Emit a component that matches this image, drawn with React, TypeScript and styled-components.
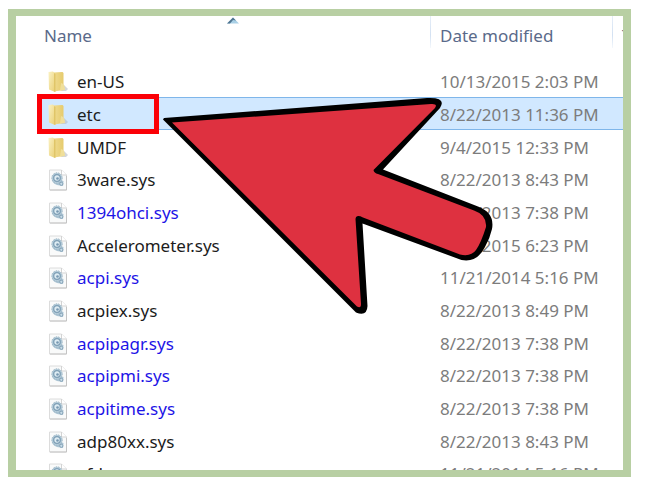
import React from "react";
import styled, { createGlobalStyle } from "styled-components";

const GlobalStyle = createGlobalStyle`
  *, *::before, *::after { box-sizing: border-box; }
  body { margin: 0; background: #ffffff; overflow: hidden; }
`;

const Frame = styled.main`
  position: relative;
  margin: 9px 21px 0 8px;
  height: calc(100vh - 12px);
  padding-left: 24px;
  border: solid #b8cfa3;
  border-width: 7px 8px;
  background: #ffffff;
  overflow: hidden;
  font-family: "Noto Sans", "Open Sans", sans-serif;
  font-size: 17px;
  line-height: 24px;
`;

const FileTable = styled.table`
  width: 100%;
  table-layout: fixed;
  border-collapse: separate;
  border-spacing: 0;
`;

const HeaderCell = styled.th<{ $width?: number; $divided?: boolean }>`
  position: relative;
  width: ${(p) => (p.$width ? `${p.$width}px` : "auto")};
  height: 49px;
  padding: 0 0 10px ${(p) => (p.$divided ? 10 : 4)}px;
  text-align: left;
  font-weight: 400;
  color: #5a6a8a;
  white-space: nowrap;
  background: ${(p) =>
    p.$divided
      ? "linear-gradient(#e6eef8, #d3e1f2 60%, #f4f8fc) 0 0 / 1px 32px no-repeat"
      : "none"};
`;

const SortButton = styled.button`
  padding: 0;
  border: 0;
  background: none;
  color: inherit;
  font: inherit;
`;

const SortMark = styled.svg`
  position: absolute;
  top: 1px;
  left: calc(50% - 8px);
  width: 12px;
  height: 7px;
`;

const Row = styled.tr<{ $selected?: boolean }>`
  height: 33px;
  &:nth-child(3n + 1) { height: 32px; }
  background: ${(p) => (p.$selected ? "#d1e8ff" : "transparent")};
  td {
    border-style: solid;
    border-color: #7fb6ea;
    border-width: ${(p) => (p.$selected ? "1px 0" : "0")};
  }
`;

const NameCell = styled.td<{ $compressed?: boolean }>`
  position: relative;
  padding: 2px 0 0 8px;
  color: ${(p) => (p.$compressed ? "#1d14e6" : "#1c1c1c")};
`;

const NameContent = styled.div`
  display: flex;
  align-items: center;
  gap: 8px;
  svg { flex: none; }
`;

const DateCell = styled.td`
  padding: 2px 0 0 10px;
  color: #7c7c7c;
  white-space: nowrap;
`;

const Highlight = styled.span`
  position: absolute;
  top: -4px;
  left: -3px;
  width: 122px;
  height: 40px;
  border: 5px solid #fb0007;
`;

const Pointer = styled.svg`
  position: absolute;
  top: 80px;
  left: 144px;
  width: 340px;
  height: 224px;
`;

const FolderIcon = () => (
  <svg width="21" height="24" viewBox="0 0 21 24" aria-hidden="true">
    <defs>
      <linearGradient id="folderFront" x1="0" y1="0" x2="1" y2="1">
        <stop offset="0" stopColor="#fbf2c4" />
        <stop offset="1" stopColor="#e9cf74" />
      </linearGradient>
      <linearGradient id="folderBack" x1="0" y1="0" x2="1" y2="0">
        <stop offset="0" stopColor="#f0dc92" />
        <stop offset="1" stopColor="#e6cb6d" />
      </linearGradient>
    </defs>
    <path d="M13 21 L16 15 L20 19 L18 21 Z" fill="#b5bac3" opacity="0.6" />
    <path d="M5 2.500 L14.500 2 L15.500 3 L15.500 20 L6 21.500 Z" fill="url(#folderBack)" />
    <path d="M0.500 2 L5 1.500 L7 3.500 L7 22 L1 19.500 Z" fill="url(#folderFront)" />
    <path d="M6 3 L7.500 4 L7.500 22 L6 21.300 Z" fill="#e0c568" />
    <path d="M13 13 Q17 14 17 20 L12 20.500 Z" fill="#f0df9a" />
  </svg>
);

const SystemFileIcon = () => (
  <svg width="21" height="22" viewBox="0 0 21 22" aria-hidden="true">
    <path d="M1.500 1 H13.500 L18.500 6 V21 H1.500 Z" fill="#f9fafa" stroke="#dcdcdc" />
    <path d="M13.500 1 V6 H18.500" fill="#ffffff" stroke="#d3d3d3" />
    <path d="M2 21 H18.500 V7" fill="none" stroke="#c4c4c4" />
    <path d="M4 8 Q3 14 9 16 L15 17 L15.500 12 Z" fill="#a9c3d3" />
    <circle cx="9" cy="9" r="5.200" fill="#b7cfdc" stroke="#9db6c6" strokeWidth="1" strokeDasharray="1.500 1" />
    <circle cx="9" cy="9" r="3.300" fill="#dcebf2" stroke="#7f9fb6" strokeWidth="1.300" />
    <circle cx="9.500" cy="9.500" r="1.300" fill="#7798b2" />
    <circle cx="13.300" cy="14.800" r="1.600" fill="#c8dde9" stroke="#86a3b7" />
  </svg>
);

type Entry = { name: string; date: string; folder?: boolean; compressed?: boolean };

const entries: Entry[] = [
  { name: "en-US", date: "10/13/2015 2:03 PM", folder: true },
  { name: "etc", date: "8/22/2013 11:36 PM", folder: true },
  { name: "UMDF", date: "9/4/2015 12:33 PM", folder: true },
  { name: "3ware.sys", date: "8/22/2013 8:43 PM" },
  { name: "1394ohci.sys", date: "8/22/2013 7:38 PM", compressed: true },
  { name: "Accelerometer.sys", date: "8/22/2015 6:23 PM" },
  { name: "acpi.sys", date: "11/21/2014 5:16 PM", compressed: true },
  { name: "acpiex.sys", date: "8/22/2013 8:49 PM" },
  { name: "acpipagr.sys", date: "8/22/2013 7:38 PM", compressed: true },
  { name: "acpipmi.sys", date: "8/22/2013 7:38 PM", compressed: true },
  { name: "acpitime.sys", date: "8/22/2013 7:38 PM", compressed: true },
  { name: "adp80xx.sys", date: "8/22/2013 8:43 PM" },
  { name: "afd.sys", date: "11/21/2014 5:16 PM" },
];

export default function App() {
  return (
    <>
      <GlobalStyle />
      <Frame>
        <FileTable>
          <thead>
            <tr>
              <HeaderCell scope="col" aria-sort="ascending">
                <SortButton type="button">Name</SortButton>
                <SortMark viewBox="0 0 12 7" aria-hidden="true">
                  <path d="M0 6.500 L6 0.500 L12 6.500 Z" fill="#a9d0e6" />
                  <path d="M0 6.500 L6 0.500 L9 3.500 L6 3 L3 6.500 Z" fill="#4f7590" />
                </SortMark>
              </HeaderCell>
              <HeaderCell scope="col" $width={182} $divided>
                <SortButton type="button">Date modified</SortButton>
              </HeaderCell>
              <HeaderCell scope="col" $width={11} $divided>
                <SortButton type="button">Type</SortButton>
              </HeaderCell>
            </tr>
          </thead>
          <tbody>
            {entries.map((entry) => {
              const selected = entry.name === "etc";
              return (
                <Row key={entry.name} $selected={selected} aria-selected={selected}>
                  <NameCell $compressed={entry.compressed}>
                    <NameContent>
                      {entry.folder ? <FolderIcon /> : <SystemFileIcon />}
                      {entry.name}
                    </NameContent>
                    {selected && <Highlight />}
                  </NameCell>
                  <DateCell>{entry.date}</DateCell>
                  <td />
                </Row>
              );
            })}
          </tbody>
        </FileTable>
        <Pointer viewBox="160 96 340 224" aria-hidden="true">
          <path
            d="M163 119.500 L164 118 L427 98 Q447 97 440 108 L383 169.500 L478 206.500 Q495 213 492 229 Q490 238 485 247 Q477 263 461.500 260 L362.500 223.500 L367.500 306 Q367 317 356 312.500 Z"
            fill="#000000"
          />
          <path
            d="M172 122.500 L431 104 Q438 103.500 435 108 L373.500 170 Q374 173 378 174 L474 210.500 Q487 215 486 227 Q481 243 476 250 Q471 257 460 254.500 L363 217.500 Q356 214 355.500 219 L361 304 Q361 309 357 306.500 Z"
            fill="#de3140"
          />
        </Pointer>
      </Frame>
    </>
  );
}
